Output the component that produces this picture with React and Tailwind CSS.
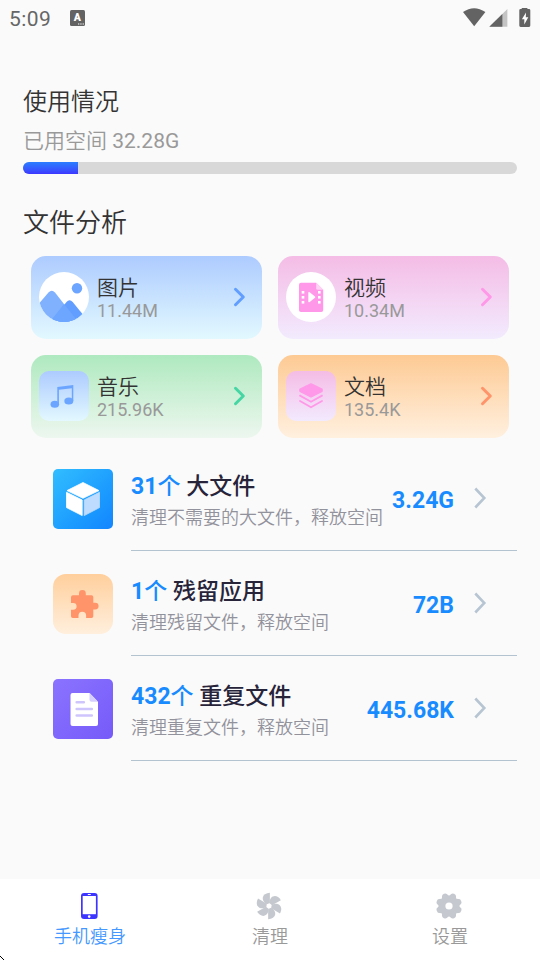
import React, { useState } from 'react';

const ImageIcon = () => (
  <svg width="50" height="50" viewBox="0 0 50 50">
    <defs>
      <clipPath id="imageClip">
        <circle cx="25" cy="25" r="25" />
      </clipPath>
    </defs>
    <circle cx="25" cy="25" r="25" fill="#fff" />
    <g clipPath="url(#imageClip)">
      <circle cx="38" cy="16.2" r="5.2" fill="#6ca5ff" />
      <path d="M-4 36 L9.5 20.5 Q12.7 17 16 20.5 L39 50 H-4Z" fill="#7fb1ff" />
      <path d="M11 50 L27.5 30 Q30.5 26.5 33.7 30 L50 50Z" fill="#619eff" />
      <path d="M13 47.5 L25 32 L37 47 V50 H13Z" fill="#6da6ff" />
    </g>
  </svg>
);

const VideoIcon = () => (
  <svg width="50" height="50" viewBox="0 0 50 50">
    <circle cx="25" cy="25" r="25" fill="#fff" />
    <path d="M15 10.7 H30.2 L37.2 17.7 V38 Q37.2 40 35.2 40 H15 Q13 40 13 38 V12.7 Q13 10.7 15 10.7Z" fill="#ff98e8" />
    <path d="M30.2 10.7 L37.2 17.7 H31.7 Q30.2 17.7 30.2 16.2Z" fill="#ffd3f5" />
    <path d="M22.3 20.9 Q22.3 19.3 23.7 20.2 L29 24.4 Q29.8 25.1 29 25.8 L23.7 30 Q22.3 30.9 22.3 29.3Z" fill="#fff" />
    <g fill="#fff">
      <rect x="15.7" y="19" width="2.6" height="2.6" />
      <rect x="15.7" y="24" width="2.6" height="2.6" />
      <rect x="15.7" y="29" width="2.6" height="2.6" />
      <rect x="32" y="19" width="2.6" height="2.6" />
      <rect x="32" y="24" width="2.6" height="2.6" />
      <rect x="32" y="29" width="2.6" height="2.6" />
    </g>
  </svg>
);

const MusicIcon = () => (
  <div className="w-[50px] h-[50px] rounded-[10px] bg-linear-to-b from-[#adcbff] to-[#e3f8ff]">
    <svg width="50" height="50" viewBox="0 0 50 50" fill="#6ca5ff">
      <path d="M18.3 15.9 L34.3 13.9 V30 H32.8 V17.2 L19.9 18.8 V33.5 H18.3Z" />
      <ellipse cx="15.8" cy="33.3" rx="4.3" ry="3.5" />
      <ellipse cx="29.8" cy="30" rx="4.5" ry="3.5" />
    </svg>
  </div>
);

const DocIcon = () => (
  <div className="w-[50px] h-[50px] rounded-[10px] bg-linear-to-b from-[#f4bce6] to-[#f2eafe]">
    <svg width="50" height="50" viewBox="0 0 50 50">
      <path d="M25 13.2 L35.8 18.4 V20 L25 25.6 L14.2 20 V18.4Z" fill="#ff98e8" stroke="#ff98e8" strokeWidth="2" strokeLinejoin="round" />
      <path d="M14 24.6 L25 30.7 L36 24.6 M14 30 L25 36.2 L36 30" fill="none" stroke="#ff98e8" strokeWidth="1.8" strokeLinecap="round" />
    </svg>
  </div>
);

const BoxIcon = () => (
  <div className="w-[60px] h-[60px] rounded-[5px] bg-linear-to-br from-[#32bdff] to-[#1485ff]">
    <svg width="60" height="60" viewBox="0 0 60 60" strokeLinejoin="round">
      <path d="M30 13.5 L46 21.6 L30 29.3 L14 21.6Z" fill="#fff" stroke="#fff" strokeWidth="0.8" />
      <path d="M13.5 23.3 L29.2 31 V46.6 L13.5 38.6Z" fill="#fff" stroke="#fff" strokeWidth="0.8" />
      <path d="M31.2 31 L46.5 23.3 V38.6 L31.2 46.6Z" fill="#bedcff" stroke="#bedcff" strokeWidth="0.8" />
    </svg>
  </div>
);

const PuzzleIcon = () => (
  <div className="w-[60px] h-[60px] rounded-[13px] bg-linear-to-b from-[#ffcf9c] to-[#ffefdd]">
    <svg width="60" height="60" viewBox="0 0 60 60" fill="#ff946b">
      <path d="M20 21.3 H26 V19.5 A3.3 3.3 0 0 1 32.8 19.5 V21.3 H38.5 Q40.3 21.3 40.3 23 V28.7 H42.2 A3.4 3.4 0 0 1 42.2 35.5 H40.3 V42.2 Q40.3 44 38.5 44 H33.1 V41.6 A3.8 3.8 0 0 0 25.5 41.6 V44 H19.8 Q18 44 18 42.2 V35.7 H20.2 A3.4 3.4 0 0 0 20.2 28.9 H18 V23.3 Q18 21.3 20 21.3Z" />
    </svg>
  </div>
);

const FileIcon = () => (
  <div className="w-[60px] h-[60px] rounded-[5px] bg-linear-to-br from-[#8b73ff] to-[#765af9]">
    <svg width="60" height="60" viewBox="0 0 60 60">
      <path d="M19.5 14 H36.5 L45 22.7 V45 Q45 47 43 47 H19.5 Q17.5 47 17.5 45 V16 Q17.5 14 19.5 14Z" fill="#fff" />
      <path d="M36.5 14 L45 22.7 H38.5 Q36.5 22.7 36.5 20.7Z" fill="#d6ceff" />
      <path d="M23.7 23.3 H30.8 M23.7 30 H38.8 M23.7 36.5 H38.8" stroke="#cfc5fd" strokeWidth="2.6" strokeLinecap="round" />
    </svg>
  </div>
);

const PhoneIcon = () => (
  <svg width="28" height="28" viewBox="0 0 28 28">
    <rect x="6" y="1" width="16.6" height="26" rx="3" fill="#3d35ff" />
    <rect x="7.7" y="4" width="13.2" height="18.2" fill="#fff" />
    <rect x="12.7" y="2" width="3.2" height="1" rx="0.5" fill="#fff" />
    <circle cx="14.2" cy="24.6" r="1.3" fill="#fff" />
  </svg>
);

const FanIcon = () => (
  <svg width="28" height="28" viewBox="-14 -14 28 28" fill="#c5c9cf">
    {[0, 60, 120, 180, 240, 300].map((a) => (
      <path key={a} transform={`rotate(${a})`} d="M0.9 -13.2 V-3 L-2.2 -1.8 C-8.6 -5.2 -7.4 -13 0.9 -13.2Z" />
    ))}
  </svg>
);

const GearIcon = () => (
  <svg width="28" height="28" viewBox="-14 -14 28 28">
    <circle r="10.4" fill="#c5c9cf" />
    {[22.5, 67.5, 112.5, 157.5, 202.5, 247.5, 292.5, 337.5].map((a) => (
      <path key={a} transform={`rotate(${a})`} d="M-4 -9 L-2.6 -12 Q-2 -13.2 0 -13.2 Q2 -13.2 2.6 -12 L4 -9Z" fill="#c5c9cf" />
    ))}
    <circle r="3.6" fill="#fff" />
  </svg>
);

const cards = [
  { name: '图片', size: '11.44M', icon: <ImageIcon />, bg: 'from-[#adcbff] to-[#e3f9ff]', arrow: '#619eff' },
  { name: '视频', size: '10.34M', icon: <VideoIcon />, bg: 'from-[#f4bce6] to-[#f2ebfe]', arrow: '#ff98e8' },
  { name: '音乐', size: '215.96K', icon: <MusicIcon />, bg: 'from-[#aee9bf] to-[#edf7ef]', arrow: '#45d6a4' },
  { name: '文档', size: '135.4K', icon: <DocIcon />, bg: 'from-[#fdca93] to-[#fff0df]', arrow: '#ff946b' },
];

const rows = [
  { count: '31', title: '大文件', desc: '清理不需要的大文件，释放空间', size: '3.24G', icon: <BoxIcon /> },
  { count: '1', title: '残留应用', desc: '清理残留文件，释放空间', size: '72B', icon: <PuzzleIcon /> },
  { count: '432', title: '重复文件', desc: '清理重复文件，释放空间', size: '445.68K', icon: <FileIcon /> },
];

const tabs = [
  { label: '手机瘦身', icon: <PhoneIcon /> },
  { label: '清理', icon: <FanIcon /> },
  { label: '设置', icon: <GearIcon /> },
];

const StatusBar = () => (
  <div className="h-9 flex items-center justify-between px-[9px] text-[#666]">
    <div className="flex items-center">
      <span className="text-[21px] leading-9 tracking-[0.4px] pt-[1px]">5:09</span>
      <svg className="ml-[19px]" width="15" height="16" viewBox="0 0 15 16">
        <rect width="15" height="16" rx="1.5" fill="#636363" />
        <text x="7.3" y="11.3" textAnchor="middle" fontSize="10.5" fontWeight="900" fill="#fff">A</text>
        <path d="M8 14 h1.3 M10.3 14 h1.3 M12.6 14 h1.3" stroke="#fff" strokeWidth="1.1" />
      </svg>
    </div>
    <svg width="68" height="20" viewBox="0 0 68 20" fill="#636363">
      <path d="M0 4 Q11 -3.6 22.4 4 L11.2 18.2Z" />
      <path d="M44.4 1 V18.8 H26.3Z" fill="#c4c4c4" />
      <path d="M39.4 5.9 V18.8 H26.3Z" />
      <path d="M58.7 -1 H64.4 V1 H66 Q67.3 1 67.3 2.3 V17.6 Q67.3 19 66 19 H57.6 Q56.3 19 56.3 17.6 V2.3 Q56.3 1 57.6 1 H58.7Z" />
      <path d="M63 4.6 L58.9 11.2 H61.3 V16.4 L65.3 9.3 H62.8Z" fill="#fff" />
    </svg>
  </div>
);

const App = () => {
  const [active, setActive] = useState(0);

  return (
    <div className="relative w-full h-[960px] flex flex-col overflow-hidden bg-[#fafafa] font-[Roboto,'Noto_Sans_CJK_SC_DemiLight','Noto_Sans_CJK_SC',sans-serif]">
      <StatusBar />

      <main className="flex-1 px-[23px] pt-12">
        <h2 className="text-[24px] leading-9 text-[#333]">使用情况</h2>
        <p className="mt-[5px] text-[21px] leading-8 text-[#999]">已用空间 32.28G</p>
        <div className="mt-[5px] h-3 rounded-full bg-[#d8d8d8] overflow-hidden">
          <div className="h-full w-[55px] bg-linear-to-b from-[#2a7dff] to-[#3d35ff]" />
        </div>

        <h2 className="mt-[29px] text-[26px] leading-10 text-[#333]">文件分析</h2>
        <div className="mt-[13px] px-2 grid grid-cols-2 gap-4">
          {cards.map((c) => (
            <div key={c.name} className={`h-[83px] pl-2 pr-[15px] pb-[1px] flex items-center rounded-[15px] bg-linear-to-b ${c.bg}`}>
              {c.icon}
              <div className="ml-2 pt-[3px] flex-1">
                <p className="text-[21px] leading-6 text-[#333]">{c.name}</p>
                <p className="text-[18px] leading-[22px] text-[#999]">{c.size}</p>
              </div>
              <svg width="14" height="20" viewBox="0 0 14 20" fill="none" stroke={c.arrow} strokeWidth="3" strokeLinecap="round" strokeLinejoin="round">
                <path d="M2.5 2.3 L10.3 10 L2.5 17.7" />
              </svg>
            </div>
          ))}
        </div>

        <div className="mt-2 pl-[30px]">
          {rows.map((r) => (
            <div key={r.title} className="flex h-[105px]">
              <div className="pt-[23px]">{r.icon}</div>
              <div className="ml-[18px] flex-1 flex items-center border-b border-[#b3c3d0]">
                <div className="flex-1 pt-2 whitespace-nowrap">
                  <p className="text-[23px] leading-8 font-medium text-[#27243a] font-[Roboto,'Noto_Sans_CJK_SC',sans-serif]">
                    <span className="text-[#178bff]"><b className="font-bold">{r.count}</b>个</span> {r.title}
                  </p>
                  <p className="text-[18px] leading-[30px] text-[#92929c]">{r.desc}</p>
                </div>
                <span className="pt-[5px] text-[23px] leading-8 font-bold text-[#178bff]">{r.size}</span>
                <svg className="ml-5 mr-[30px]" width="13" height="22" viewBox="0 0 13 22" fill="none" stroke="#b7c5d3" strokeWidth="2.6">
                  <path d="M1.3 1.5 L10.3 11 L1.3 20.5" />
                </svg>
              </div>
            </div>
          ))}
        </div>
      </main>

      <nav className="h-[81px] grid grid-cols-3 bg-white">
        {tabs.map((t, i) => (
          <button key={t.label} className="flex flex-col items-center pt-[13px]" onClick={() => setActive(i)}>
            <span className="pr-0.5">{t.icon}</span>
            <span className={`mt-1 text-[18px] leading-[26px] ${i === active ? 'text-[#4598ff]' : 'text-[#999]'}`}>
              {t.label}
            </span>
          </button>
        ))}
      </nav>

      <svg className="absolute left-0 bottom-0" width="4" height="4" viewBox="0 0 4 4" fill="#000">
        <path d="M0 0h1v1h-1z M1 1h1v1h-1z M2 2h1v1h-1z M3 3h1v1h-1z" />
      </svg>
    </div>
  );
};

export default App;
